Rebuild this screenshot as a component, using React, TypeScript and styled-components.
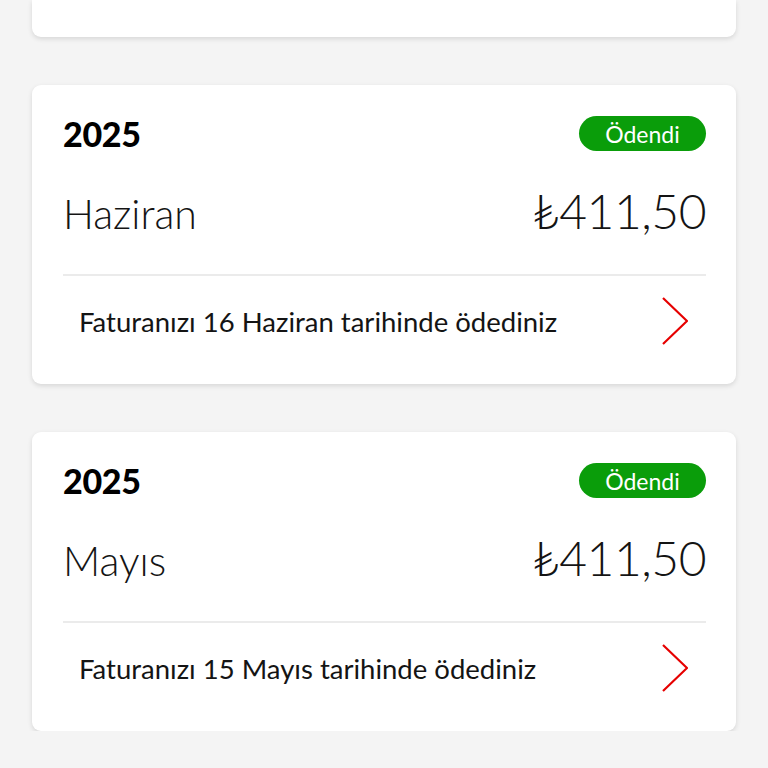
import React from 'react';
import styled, { createGlobalStyle } from 'styled-components';

const GlobalStyle = createGlobalStyle`
  html, body {
    margin: 0;
    padding: 0;
    background: #f4f4f4;
    font-family: Lato, "Noto Sans", sans-serif;
    color: #141414;
    overflow: hidden;
  }
`;

const BillList = styled.div`
  display: flex;
  flex-direction: column;
  gap: 48px;
  padding: 0 32px;
`;

const Card = styled.section<{ $cut?: boolean }>`
  background: #fff;
  border-radius: ${props => props.$cut ? '0 0 9px 9px' : '9px'};
  box-shadow: 0 2px 5px rgba(0, 0, 0, 0.12);
  height: ${props => props.$cut ? '37px' : 'auto'};
  padding: ${props => props.$cut ? '0' : '31px 30px 18px 31px'};
  display: flex;
  flex-direction: column;
`;

const HeaderRow = styled.div`
  display: flex;
  align-items: center;
  justify-content: space-between;
  height: 35px;
`;

const Year = styled.span`
  font-size: 34px;
  font-weight: 900;
  letter-spacing: -0.3px;
  line-height: 1;
  color: #000;
`;

const StatusBadge = styled.span`
  height: 35px;
  width: 127px;
  border-radius: 18px;
  background: #0a9d0a;
  color: #fff;
  font-size: 23px;
  font-weight: 400;
  display: flex;
  align-items: center;
  justify-content: center;
`;

const AmountRow = styled.div`
  display: flex;
  align-items: baseline;
  justify-content: space-between;
  margin-top: 30px;
  height: 60px;
  line-height: 60px;
`;

const Month = styled.span`
  font-size: 41px;
  font-weight: 300;
`;

const Amount = styled.span`
  font-size: 48px;
  font-weight: 300;
  letter-spacing: -0.5px;
`;

const Divider = styled.hr`
  border: none;
  height: 2px;
  background: #ebebeb;
  margin: 33px 0 0;
`;

const FooterRow = styled.div`
  display: flex;
  align-items: center;
  justify-content: space-between;
  min-height: 90px;
  padding: 0 18px 0 16px;
`;

const FooterText = styled.span`
  font-size: 27.5px;
  font-weight: 400;
  line-height: 1.2;
`;

const Chevron = () => (
  <svg width="26" height="48" viewBox="0 0 26 48" fill="none">
    <polyline points="1,1 25,24 1,47" stroke="#e60000" strokeWidth="2.2" strokeLinejoin="miter" />
  </svg>
);

interface Bill {
  year: string;
  month: string;
  amount: string;
  paidOn: string;
}

const bills: Bill[] = [
  { year: '2025', month: 'Haziran', amount: '₺411,50', paidOn: 'Faturanızı 16 Haziran tarihinde ödediniz' },
  { year: '2025', month: 'Mayıs', amount: '₺411,50', paidOn: 'Faturanızı 15 Mayıs tarihinde ödediniz' },
];

function BillCard({ bill }: { bill: Bill }) {
  return (
    <Card>
      <HeaderRow>
        <Year>{bill.year}</Year>
        <StatusBadge>Ödendi</StatusBadge>
      </HeaderRow>
      <AmountRow>
        <Month>{bill.month}</Month>
        <Amount>{bill.amount}</Amount>
      </AmountRow>
      <Divider />
      <FooterRow>
        <FooterText>{bill.paidOn}</FooterText>
        <Chevron />
      </FooterRow>
    </Card>
  );
}

export default function App() {
  return (
    <>
      <GlobalStyle />
      <BillList>
        <Card $cut />
        {bills.map(bill => <BillCard bill={bill} key={bill.month} />)}
      </BillList>
    </>
  );
}
